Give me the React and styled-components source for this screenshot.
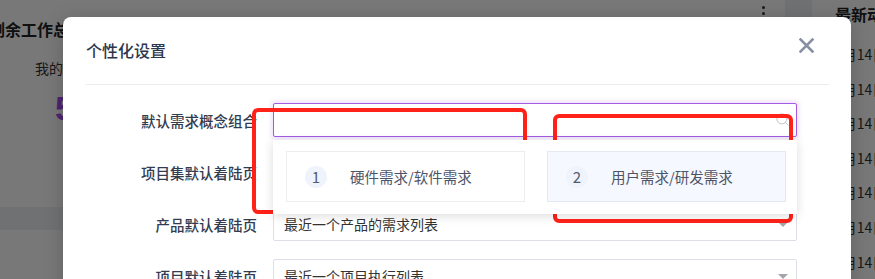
import styled, { createGlobalStyle } from "styled-components";
import { Search } from "lucide-react";

const GlobalStyle = createGlobalStyle`
  html, body {
    margin: 0;
    padding: 0;
    width: 875px;
    height: 279px;
    overflow: hidden;
    font-family: "Noto Sans CJK SC", "Noto Sans", sans-serif;
  }
  * {
    box-sizing: border-box;
  }
`;

const Page = styled.div`
  position: relative;
  width: 875px;
  height: 279px;
  display: flex;
  gap: 27px;
  background: #eef0f3;
  overflow: hidden;
`;

const MainArea = styled.div`
  width: 785px;
  flex-shrink: 0;
  display: flex;
  flex-direction: column;
  gap: 23px;
`;

const Card = styled.div`
  background: #ffffff;
  height: ${(p) => p.$height || "auto"};
  flex: ${(p) => (p.$grow ? 1 : "none")};
`;

const CardHead = styled.div`
  display: flex;
  justify-content: space-between;
  align-items: flex-start;
  padding: 6px 20px 0 0;
`;

const CardTitle = styled.div`
  margin: 13px 0 0 -11px;
  font-size: 16px;
  font-weight: 600;
  line-height: 20px;
  color: #222;
`;

const More = styled.div`
  width: 4px;
  display: flex;
  flex-direction: column;
  gap: 3px;
  align-items: center;
  & > span {
    width: 3px;
    height: 3px;
    border-radius: 50%;
    background: #333;
  }
`;

const Stat = styled.div`
  padding: 20px 0 0 35px;
  display: flex;
  flex-direction: column;
  align-items: flex-start;
`;

const StatLabel = styled.div`
  font-size: 14px;
  color: #333;
  line-height: 18px;
`;

const StatValue = styled.div`
  margin: 12px 0 0 20px;
  font-family: "Liberation Sans", sans-serif;
  font-size: 34px;
  font-weight: 700;
  line-height: 38px;
  color: #a24ef0;
`;

const SideCard = styled.div`
  flex: 1;
  background: #ffffff;
  padding: 3px 0 0 23px;
  white-space: nowrap;
`;

const SideTitle = styled.div`
  font-size: 16px;
  font-weight: 600;
  line-height: 22px;
  color: #222;
  margin-bottom: 20px;
`;

const SideRow = styled.div`
  font-size: 14px;
  line-height: 18px;
  height: 34.6px;
  color: #333;
`;

const Mask = styled.div`
  position: absolute;
  inset: 0;
  background: rgba(0, 0, 0, 0.53);
`;

const Modal = styled.div`
  position: absolute;
  left: 63px;
  top: 17px;
  width: 788px;
  height: 320px;
  background: #ffffff;
  border-radius: 8px;
  box-shadow: 0 4px 20px rgba(0, 0, 0, 0.18);
  padding: 0 22px 0 23px;
`;

const ModalHead = styled.div`
  height: 68px;
  display: flex;
  justify-content: space-between;
  align-items: flex-start;
  padding: 21px 15px 0 0;
  border-bottom: 1px solid #ececec;
`;

const ModalTitle = styled.div`
  font-size: 16px;
  font-weight: 500;
  line-height: 24px;
  color: #2c374d;
`;

const CloseBtn = styled.button`
  width: 15px;
  height: 15px;
  padding: 0;
  border: none;
  background: none;
  cursor: pointer;
  display: block;
`;

const Form = styled.div`
  padding-top: 18px;
  display: flex;
  flex-direction: column;
  gap: 18px;
`;

const Row = styled.div`
  display: flex;
  align-items: center;
  height: 34px;
`;

const Label = styled.div`
  width: 187px;
  flex-shrink: 0;
  padding-right: 16px;
  text-align: right;
  font-size: 14.5px;
  font-weight: 500;
  color: #323c50;
  white-space: nowrap;
`;

const Field = styled.div`
  position: relative;
  width: 524px;
  height: 34px;
  border: 1px solid ${(p) => (p.$focused ? "#a35be6" : "#dcdfe6")};
  border-radius: 2px;
  box-shadow: ${(p) =>
    p.$focused ? "0 0 4px 2px rgba(163, 91, 230, 0.18)" : "none"};
  display: flex;
  align-items: center;
  padding: 0 10px;
  font-size: 14px;
  color: #333;
  background: #fff;
`;

const SearchIcon = styled(Search)`
  position: absolute;
  right: 6px;
  top: 8px;
  color: #c0c4cc;
`;

const Caret = styled.span`
  position: absolute;
  right: 8px;
  top: 14px;
  width: 0;
  height: 0;
  border-left: 5px solid transparent;
  border-right: 5px solid transparent;
  border-top: 5px solid #a3a6ad;
`;

const Dropdown = styled.div`
  position: absolute;
  left: -1px;
  top: 36px;
  width: 524px;
  background: #fff;
  box-shadow: 0 2px 10px rgba(0, 0, 0, 0.14);
  padding: 11px 11px 12px 13px;
  display: flex;
  gap: 22px;
  z-index: 2;
`;

const Option = styled.div`
  flex: 1;
  height: 51px;
  display: flex;
  align-items: center;
  gap: 23px;
  padding-left: 18px;
  border: 1px solid ${(p) => (p.$active ? "#e3e8f3" : "#ebedf0")};
  background: ${(p) => (p.$active ? "#f5f8fe" : "#fff")};
  font-size: 14.5px;
  color: #4d5468;
`;

const Num = styled.span`
  width: 22px;
  height: 22px;
  border-radius: 50%;
  background: #eff3fb;
  display: flex;
  align-items: center;
  justify-content: center;
  font-size: 15px;
  color: #535b6e;
`;

const Mark = styled.div`
  position: absolute;
  left: ${(p) => p.$x}px;
  top: ${(p) => p.$y}px;
  width: ${(p) => p.$w}px;
  height: ${(p) => p.$h}px;
  border: 4px solid #ff2219;
  border-radius: 6px;
  pointer-events: none;
`;

const feed = Array.from({ length: 7 }, (_, i) => `3月14日 项目动态 ${i + 1}`);

export default function App() {
  return (
    <>
      <GlobalStyle />
      <Page>
        <MainArea>
          <Card $height="207px">
            <CardHead>
              <CardTitle>剩余工作总览</CardTitle>
              <More>
                <span />
                <span />
              </More>
            </CardHead>
            <Stat>
              <StatLabel>我的剩余工作</StatLabel>
              <StatValue>5</StatValue>
            </Stat>
          </Card>
          <Card $grow />
        </MainArea>
        <SideCard>
          <SideTitle>最新动态</SideTitle>
          {feed.map((t) => (
            <SideRow key={t}>{t}</SideRow>
          ))}
        </SideCard>
        <Mask />
        <Modal>
          <ModalHead>
            <ModalTitle>个性化设置</ModalTitle>
            <CloseBtn aria-label="关闭">
              <svg width="15" height="15" viewBox="0 0 15 15">
                <path
                  d="M1.5 1.5 L13.5 13.5 M13.5 1.5 L1.5 13.5"
                  stroke="#8790a3"
                  strokeWidth="2.6"
                  strokeLinecap="square"
                />
              </svg>
            </CloseBtn>
          </ModalHead>
          <Form>
            <Row>
              <Label>默认需求概念组合</Label>
              <Field $focused>
                <SearchIcon size={15} strokeWidth={1.6} />
                <Dropdown>
                  <Option>
                    <Num>1</Num>
                    硬件需求/软件需求
                  </Option>
                  <Option $active>
                    <Num>2</Num>
                    用户需求/研发需求
                  </Option>
                </Dropdown>
              </Field>
            </Row>
            <Row>
              <Label>项目集默认着陆页</Label>
              <Field>
                <Caret />
              </Field>
            </Row>
            <Row>
              <Label>产品默认着陆页</Label>
              <Field>
                最近一个产品的需求列表
                <Caret />
              </Field>
            </Row>
            <Row>
              <Label>项目默认着陆页</Label>
              <Field>
                最近一个项目执行列表
                <Caret />
              </Field>
            </Row>
          </Form>
        </Modal>
        <Mark $x={252} $y={108} $w={275} $h={106} />
        <Mark $x={553} $y={114} $w={240} $h={109} />
      </Page>
    </>
  );
}
